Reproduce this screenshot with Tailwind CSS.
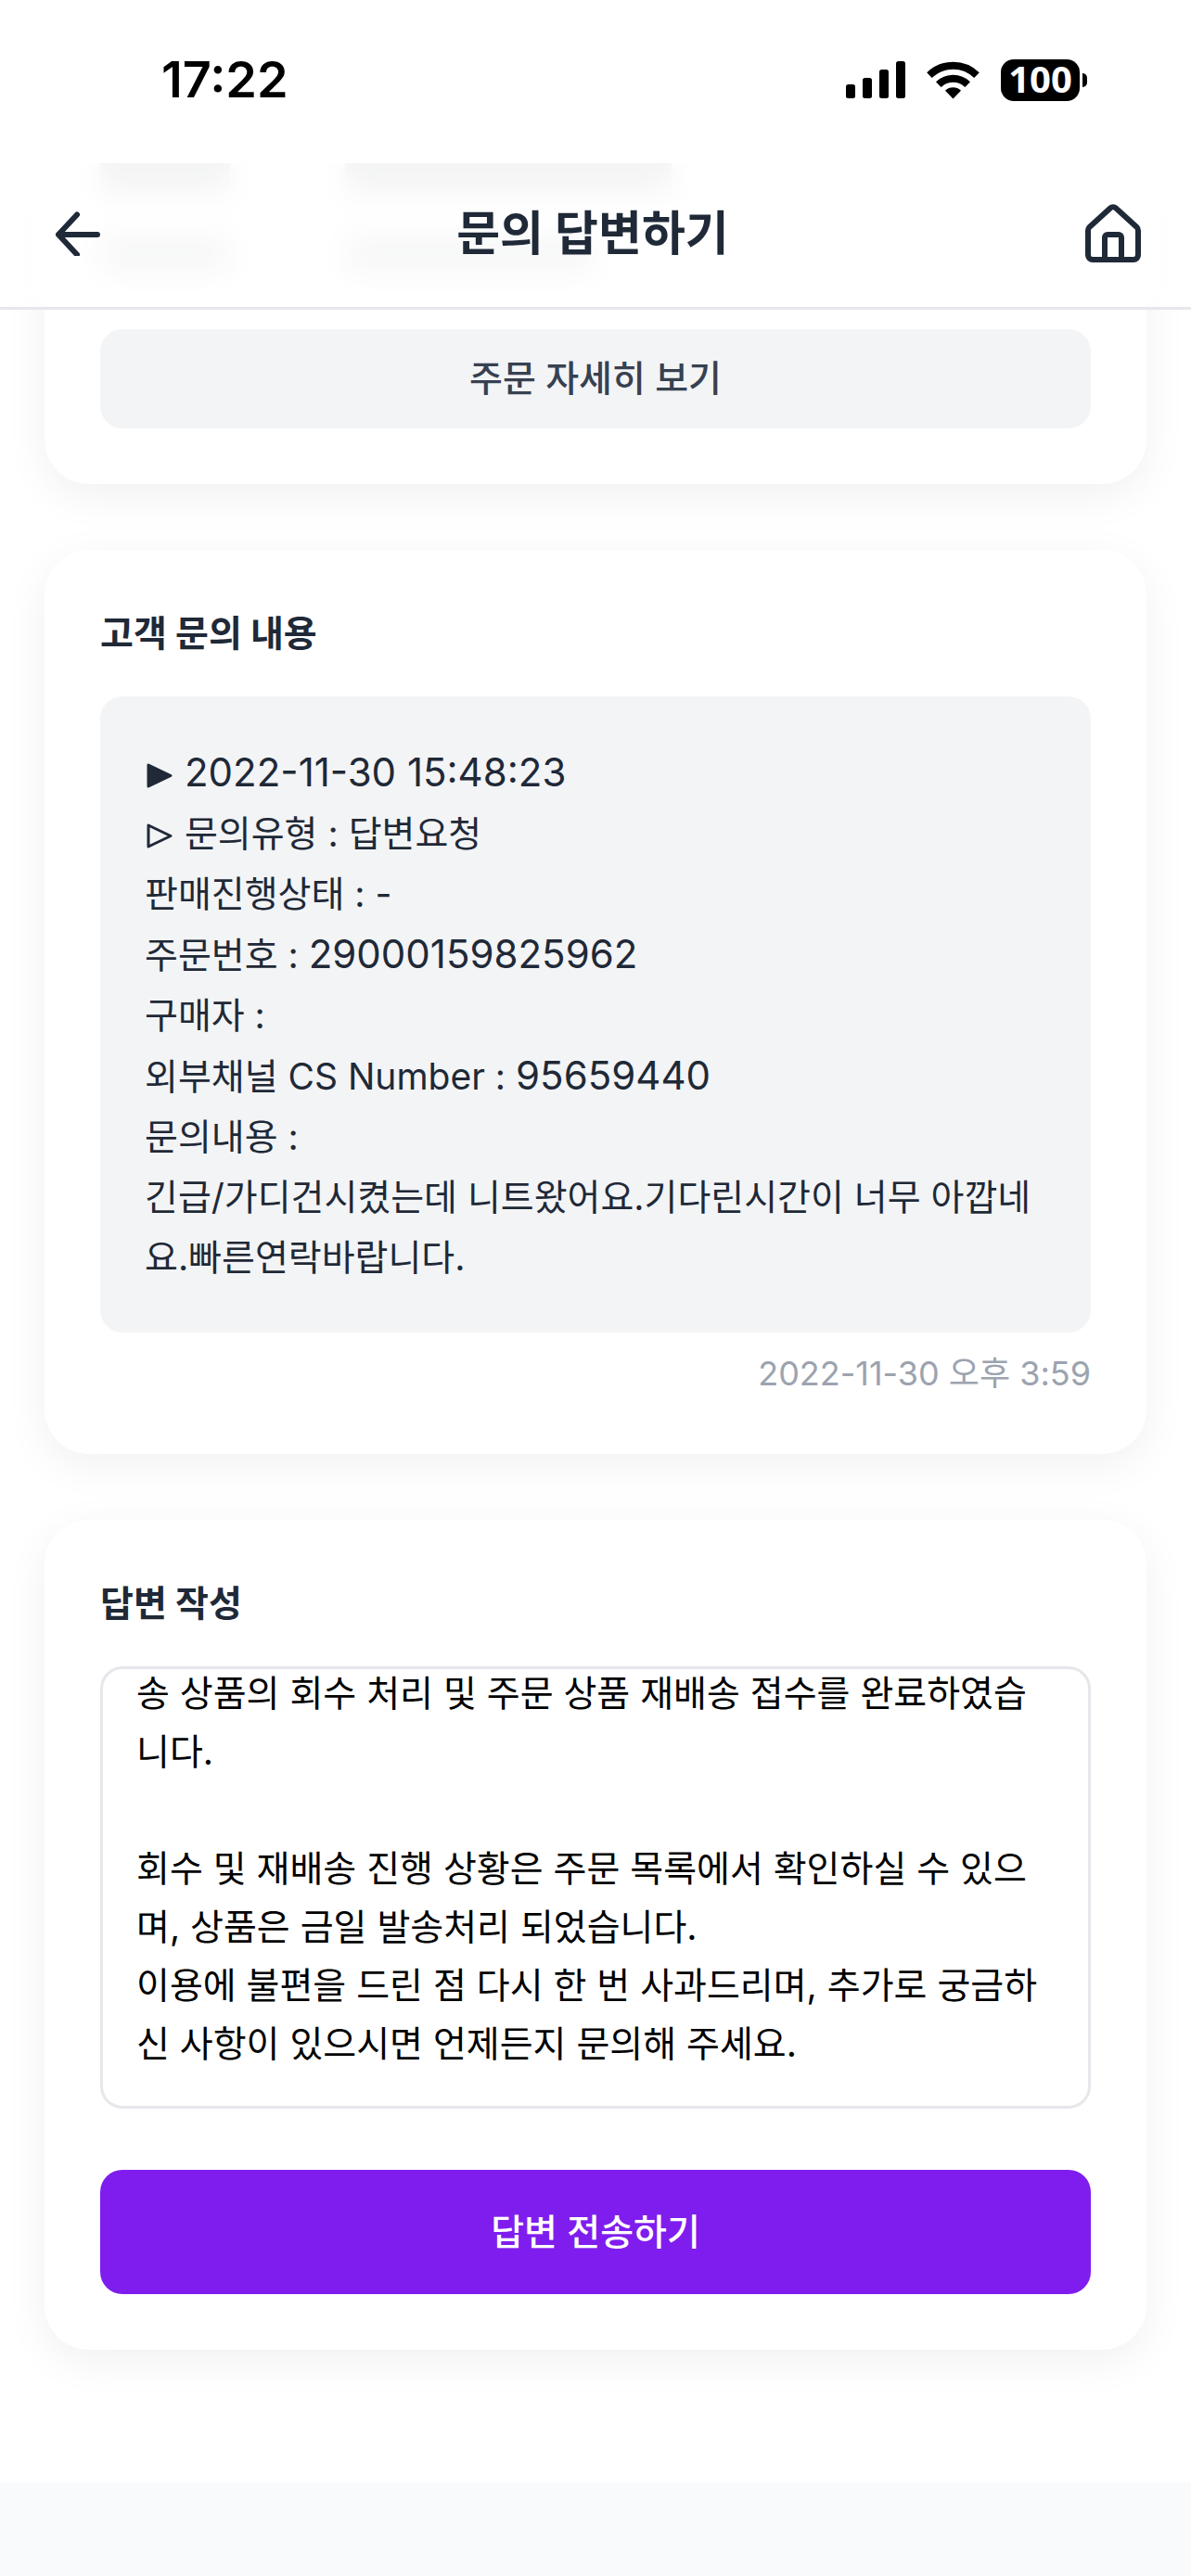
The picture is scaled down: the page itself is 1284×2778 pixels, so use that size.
<!DOCTYPE html>
<html lang="ko">

<head>
    <meta charset="UTF-8">
    <meta name="viewport" content="width=device-width, initial-scale=1.0">
    <title>문의 답변하기</title>
    <script src="https://cdn.jsdelivr.net/npm/@tailwindcss/browser@4"></script>
</head>

<body class="min-h-screen bg-[#f9fafb] font-['Inter','Noto_Sans_CJK_KR',sans-serif] text-[39px] text-[#1f2937]">

    <!------------------ Status bar ------------------------>
    <div class="relative z-10 flex h-[176px] items-center justify-between bg-white pb-1 pl-[174px] pr-[112px] text-black">
        <span class="text-[54px] leading-[60px] font-semibold">17:22</span>
        <div class="flex items-center gap-[23px]">
            <svg class="h-[42px] w-[64px]" viewBox="0 0 64 42" fill="currentColor">
                <rect x="0" y="26" width="10" height="15" rx="2.5" />
                <rect x="18" y="19" width="10" height="22" rx="2.5" />
                <rect x="36" y="10" width="10" height="31" rx="2.5" />
                <rect x="54" y="1" width="10" height="40" rx="2.5" />
            </svg>
            <svg class="h-[42px] w-[57px]" viewBox="0 0 57 42" fill="none" stroke="currentColor" stroke-width="8">
                <path d="M3 16.2a36.5 36.5 0 0 1 51 0" />
                <path d="M12.8 26.2a22.5 22.5 0 0 1 31.4 0" />
                <path d="M28.5 41.5l-8.5-8.8a12.2 12.2 0 0 1 17 0z" fill="currentColor" stroke="none" />
            </svg>
            <div class="flex items-center gap-[3px]">
                <div class="flex h-[45px] w-[85px] items-center justify-center rounded-[14px] bg-black pb-[3px] font-['Open_Sans',sans-serif] text-[40px] leading-[42px] font-bold text-white">100</div>
                <div class="h-[15px] w-[5px] rounded-r-full bg-black"></div>
            </div>
        </div>
    </div>

    <!------------------ Header ------------------------>
    <header class="sticky top-0 z-10 flex h-[158px] items-center justify-between border-b-3 border-[#e5e7eb] bg-white/70 pb-1 pl-[60px] pr-[54px] backdrop-blur-lg">
        <button type="button" aria-label="뒤로">
            <svg class="h-[48px] w-[48px]" viewBox="0 0 48 48" fill="none" stroke="currentColor" stroke-width="6" stroke-linecap="round" stroke-linejoin="round">
                <path d="M23 3.500L3 25l20 21.500M3 25h42" />
            </svg>
        </button>
        <h1 class="text-[51px] leading-[60px] font-bold">문의 답변하기</h1>
        <a href="#" aria-label="홈">
            <svg class="h-[64px] w-[60px]" viewBox="0 0 60 64" fill="none" stroke="currentColor" stroke-width="6" stroke-linejoin="round">
                <path d="M27.200 4.200a4.200 4.200 0 0 1 5.600 0l22.500 20.500a5.500 5.500 0 0 1 1.700 4V55a5 5 0 0 1-5 5H8a5 5 0 0 1-5-5V28.700a5.500 5.500 0 0 1 1.700-4z" />
                <path d="M21 60V36a3 3 0 0 1 3-3h12a3 3 0 0 1 3 3v24" />
            </svg>
        </a>
    </header>

    <main class="-mt-[158px] flex flex-col gap-[71px] bg-white px-[48px] pb-[143px]">

        <!------------------ Order ------------------------>
        <section class="rounded-b-[48px] bg-white px-[60px] pb-[60px] shadow-[0_12px_48px_rgba(0,0,0,0.06)]">
            <div class="flex flex-col gap-[46px]" aria-hidden="true">
                <div class="flex gap-[124px]">
                    <div class="h-[32px] w-[140px] bg-[#d8dadd]"></div>
                    <div class="h-[32px] w-[352px] bg-[#d8dadd]"></div>
                </div>
                <div class="flex gap-[124px]">
                    <div class="h-[40px] w-[140px] bg-[#e2e4e6]"></div>
                    <div class="h-[40px] w-[268px] bg-[#e2e4e6]"></div>
                </div>
            </div>
            <button type="button" class="mt-[61px] h-[107px] w-full rounded-[24px] bg-[#f3f4f6] font-medium text-[#374151]">주문 자세히 보기</button>
        </section>

        <!------------------ Inquiry ------------------------>
        <section class="rounded-[48px] bg-white p-[60px] shadow-[0_12px_48px_rgba(0,0,0,0.06)]">
            <h2 class="mb-[38px] leading-[60px] font-bold">고객 문의 내용</h2>
            <div class="rounded-[24px] bg-[#f3f4f6] px-[48px] py-[49px] leading-[65px]">
                <p>
                    <svg class="inline h-[32px] w-[32px]" viewBox="0 0 32 32" fill="currentColor" stroke="currentColor" stroke-width="3" stroke-linejoin="round"><path d="M4 4v23L28 15.500z" /></svg>
                    <span class="text-[42px]">2022-11-30 15:48:23</span>
                </p>
                <p>
                    <svg class="inline h-[32px] w-[32px]" viewBox="0 0 32 32" fill="none" stroke="currentColor" stroke-width="3" stroke-linejoin="round"><path d="M4 4v23L28 15.500z" /></svg>
                    문의유형 : 답변요청
                </p>
                <p>판매진행상태 : -</p>
                <p>주문번호 : <span class="text-[42px]">29000159825962</span></p>
                <p>구매자 :</p>
                <p>외부채널 CS Number : <span class="text-[42px]">95659440</span></p>
                <p>문의내용 :</p>
                <p>긴급/가디건시켰는데 니트왔어요.기다린시간이 너무 아깝네요.빠른연락바랍니다.</p>
            </div>
            <p class="mt-[18px] text-right text-[36px] leading-[53px] text-[#9ca3af]">2022-11-30 오후 3:59</p>
        </section>

        <!------------------ Reply form ------------------------>
        <section class="rounded-[48px] bg-white p-[60px] shadow-[0_12px_48px_rgba(0,0,0,0.06)]">
            <form id="replyForm">
                <label for="reply" class="mb-[38px] block leading-[60px] font-bold">답변 작성</label>
                <textarea id="reply" name="reply" class="block h-[477px] w-full resize-none rounded-[24px] border-3 border-[#e5e7eb] p-[36px] leading-[63px] text-black [scrollbar-width:none]">안녕하세요, 고객님.
송 상품의 회수 처리 및 주문 상품 재배송 접수를 완료하였습니다.

회수 및 재배송 진행 상황은 주문 목록에서 확인하실 수 있으며, 상품은 금일 발송처리 되었습니다.
이용에 불편을 드린 점 다시 한 번 사과드리며, 추가로 궁금하신 사항이 있으시면 언제든지 문의해 주세요.</textarea>
                <button type="submit" class="mt-[66px] h-[134px] w-full rounded-[24px] bg-[#7f1dee] font-medium text-white">답변 전송하기</button>
            </form>
        </section>
    </main>

    <script>
        const reply = document.getElementById('reply');
        reply.scrollTop = reply.scrollHeight;

        document.getElementById('replyForm').addEventListener('submit', function (event) {
            event.preventDefault();
        });
    </script>

</body>

</html>
